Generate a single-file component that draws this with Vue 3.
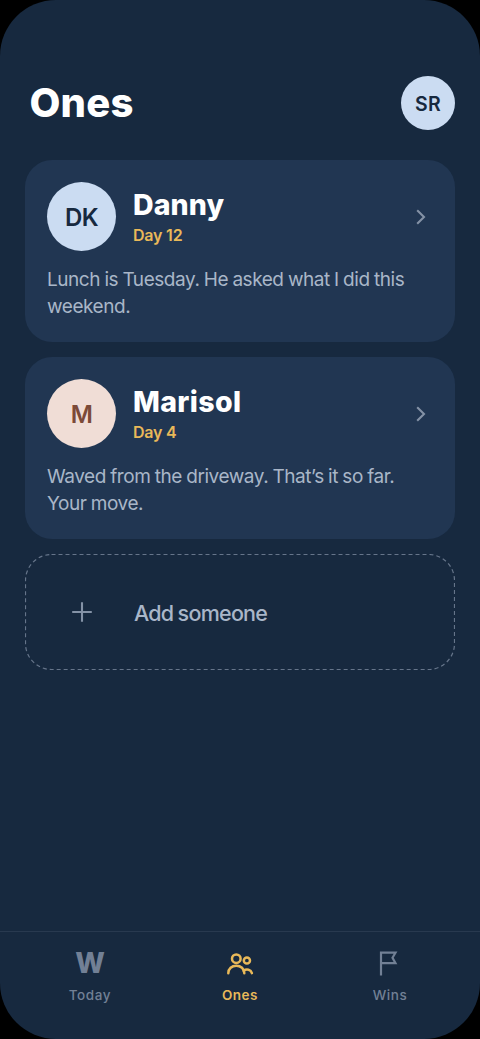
<script setup>
const people = [
  { name: 'Danny', initials: 'DK', day: 'Day 12', tone: 'blue', lines: ['Lunch is Tuesday. He asked what I did this', 'weekend.'] },
  { name: 'Marisol', initials: 'M', day: 'Day 4', tone: 'rose', lines: ['Waved from the driveway. That’s it so far.', 'Your move.'] },
]
</script>

<template>
  <div class="screen">
    <header class="header">
      <h1 class="title">Ones</h1>
      <div class="me">SR</div>
    </header>

    <main class="list">
      <article v-for="p in people" :key="p.name" class="card">
        <div class="top">
          <div class="avatar" :class="p.tone"><span>{{ p.initials }}</span></div>
          <div class="who">
            <h2 class="name" :class="p.tone + '-name'">{{ p.name }}</h2>
            <div class="day">{{ p.day }}</div>
          </div>
          <svg class="chevron" width="12" height="18" viewBox="0 0 12 18">
            <path d="M2.200 2.300 9 9 2.200 15.700" />
          </svg>
        </div>
        <p class="note">
          <span v-for="l in p.lines" :key="l">{{ l }}</span>
        </p>
      </article>

      <button class="add">
        <svg class="outline" width="430" height="116" viewBox="0 0 430 116">
          <rect x="0.5" y="0.5" width="429" height="115" rx="26" />
        </svg>
        <svg class="plus" width="20" height="20" viewBox="0 0 20 20">
          <path d="M10 .2v19.600M.2 10h19.600" />
        </svg>
        <span class="add-label">Add someone</span>
      </button>
    </main>

    <nav class="tabs">
      <div class="tab">
        <div class="icon w">W</div>
        <div class="label">Today</div>
      </div>
      <div class="tab active">
        <div class="icon">
          <svg width="28" height="24" viewBox="0 0 28 24">
            <circle cx="10.3" cy="7.7" r="4.3" />
            <circle cx="20.9" cy="9.500" r="3.100" />
            <path d="M2.300 22.200c0-4.500 3.500-7.500 8-7.500s8 3 8 7.500" />
            <path d="M17.600 19.700c3-2 7.300-1.200 8.300 2.400" />
          </svg>
        </div>
        <div class="label">Ones</div>
      </div>
      <div class="tab">
        <div class="icon flag">
          <svg width="20" height="26" viewBox="0 0 20 26">
            <path d="M3 25.500V2.700h14.500l-3 5 3 5.500H3" />
          </svg>
        </div>
        <div class="label">Wins</div>
      </div>
    </nav>
  </div>
</template>

<style>
body {
  background: #000;
}
</style>

<style scoped>
.screen {
  box-sizing: border-box;
  width: 480px;
  height: 1039px;
  display: flex;
  flex-direction: column;
  background: #17293f;
  border-radius: 56px;
  overflow: hidden;
  font-family: Inter, "Liberation Sans", sans-serif;
}
.header {
  display: flex;
  align-items: center;
  justify-content: space-between;
  height: 54px;
  padding: 76px 25px 0 29.500px;
}
.title {
  margin: 0;
  font-size: 40px;
  line-height: 54px;
  font-weight: 800;
  letter-spacing: 0.2px;
  color: #fff;
}
.me {
  width: 54px;
  height: 54px;
  border-radius: 50%;
  background: #cbdcf2;
  color: #17293f;
  font-size: 19.500px;
  line-height: 56px;
  font-weight: 600;
  letter-spacing: 0.2px;
  text-align: center;
}
.list {
  display: flex;
  flex-direction: column;
  gap: 15px;
  padding: 30px 25px 0;
}
.card {
  box-sizing: border-box;
  height: 182px;
  padding: 22px 22px 0;
  border-radius: 27px;
  background: #213652;
}
.top {
  display: flex;
  align-items: center;
  height: 69px;
}
.avatar {
  flex: none;
  width: 69px;
  height: 69px;
  border-radius: 50%;
  font-size: 24px;
  line-height: 71px;
  font-weight: 600;
  letter-spacing: -0.6px;
  text-align: center;
}
.blue {
  background: #cbdcf2;
  color: #17293f;
}
.rose {
  background: #f0ddd6;
  color: #7c4a38;
}
.who {
  flex: 1;
  padding-left: 17px;
}
.name {
  margin: 0;
  font-size: 28.500px;
  line-height: 36px;
  font-weight: 800;
  color: #fff;
}
.blue-name {
  letter-spacing: 0.1px;
}
.rose-name {
  letter-spacing: 0.350px;
}
.day {
  font-size: 16px;
  line-height: 24px;
  font-weight: 600;
  letter-spacing: -0.2px;
  color: #e9b959;
}
.chevron {
  margin-right: 6px;
}
.chevron path,
.plus path {
  fill: none;
  stroke: #8492a6;
  stroke-width: 2.100;
}
.note {
  margin: 15px 0 0;
  font-size: 19px;
  line-height: 27px;
  letter-spacing: -0.450px;
  word-spacing: -0.550px;
  color: #a9b6c8;
  white-space: nowrap;
}
.note span {
  display: block;
}
.add {
  position: relative;
  display: flex;
  align-items: center;
  height: 116px;
  padding: 0 0 0 47px;
  border: 0;
  background: none;
  font-family: inherit;
}
.outline {
  position: absolute;
  left: 0;
  top: 0;
}
.outline rect {
  fill: none;
  stroke: #66758a;
  stroke-width: 1.200;
  stroke-dasharray: 4 3;
}
.add-label {
  margin-left: 42px;
  padding-top: 2px;
  font-size: 21.500px;
  font-weight: 500;
  letter-spacing: -0.750px;
  word-spacing: -0.800px;
  color: #a9b6c8;
}
.tabs {
  box-sizing: border-box;
  display: flex;
  height: 108px;
  margin-top: auto;
  padding: 0 15px;
  border-top: 1px solid #28394f;
}
.tab {
  flex: 1;
  display: flex;
  flex-direction: column;
  align-items: center;
  padding-top: 17px;
  color: #728095;
}
.active {
  color: #e9b959;
}
.icon {
  display: flex;
  align-items: center;
  justify-content: center;
  height: 28px;
}
.icon svg {
  fill: none;
  stroke: currentColor;
  stroke-width: 2.500;
  stroke-linecap: round;
}
.flag svg {
  margin-right: 5px;
  stroke-width: 2.200;
  stroke-linecap: butt;
}
.w {
  font-size: 28px;
  font-weight: 800;
}
.label {
  margin-top: 8px;
  font-size: 13.500px;
  line-height: 20px;
  font-weight: 500;
  letter-spacing: 0.6px;
}
.active .label {
  font-weight: 600;
  letter-spacing: 0.5px;
}
</style>
